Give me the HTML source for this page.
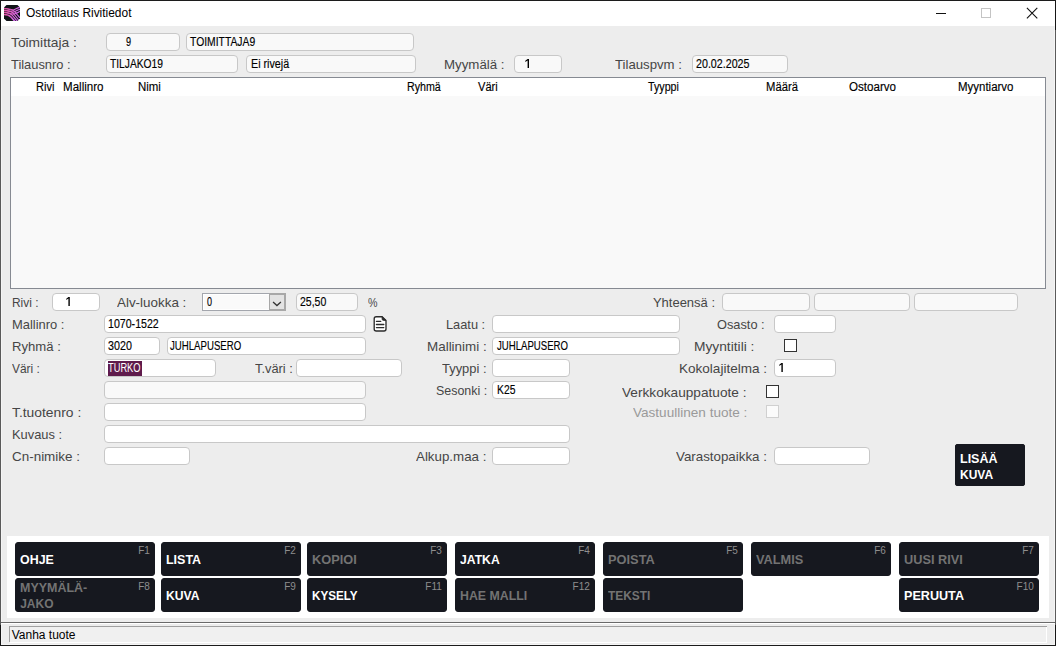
<!DOCTYPE html>
<html><head><meta charset="utf-8"><style>
html,body{margin:0;padding:0;width:1056px;height:646px;overflow:hidden;background:#ededed}
body{position:relative;font-family:"Liberation Sans",sans-serif}
.t{position:absolute;white-space:nowrap;transform-origin:0 0}
.b{position:absolute;box-sizing:content-box}
</style></head><body>
<div class="b" style="left:0px;top:0px;width:1056px;height:646px;background:#5a5a5a;"></div>
<div class="b" style="left:0px;top:0px;width:1px;height:30px;background:#151515;"></div>
<div class="b" style="left:1055px;top:0px;width:1px;height:30px;background:#151515;"></div>
<div class="b" style="left:0px;top:625px;width:1px;height:21px;background:#151515;"></div>
<div class="b" style="left:1055px;top:625px;width:1px;height:21px;background:#151515;"></div>
<div class="b" style="left:1px;top:1px;width:1054px;height:644px;background:#f5f5f5;"></div>
<div class="b" style="left:2px;top:26px;width:1052px;height:618px;background:#ededed;"></div>
<div class="b" style="left:1px;top:1px;width:1054px;height:25px;background:#ffffff;"></div>
<div class="b" style="left:0px;top:0px;width:1056px;height:1px;background:#1c1c1c;"></div>
<div class="b" style="left:0px;top:645px;width:1056px;height:1px;background:#1c1c1c;"></div>
<svg class="b" style="left:4px;top:5px" width="16" height="16" viewBox="0 0 16 16">
<defs><linearGradient id="ig" x1="0" y1="0" x2="1" y2="0"><stop offset="0" stop-color="#e4509e"/><stop offset="1" stop-color="#cf6cf0"/></linearGradient>
<clipPath id="ic"><path d="M2.5 0 H13.5 L16 2.5 V13.5 L13.5 16 H2.5 L0 13.5 V2.5 Z"/></clipPath></defs>
<path d="M2.5 0 H13.5 L16 2.5 V13.5 L13.5 16 H2.5 L0 13.5 V2.5 Z" fill="#121418"/>
<g clip-path="url(#ic)" fill="none" stroke="url(#ig)" stroke-width="1.15">
<path d="M0 3.5 C4 3.5 7 5.5 9 5 C11 4.5 13 2.8 16 2.3"/>
<path d="M0 5.4 C4 5.4 7 7.5 9.5 7 C12 6.5 14 4.5 16 4.3"/>
<path d="M0 7.3 C4 7.3 7 9.5 10 9 C12.5 8.5 14.5 7 16 6.5"/>
<path d="M0 3.5 C5 3.5 8 4 10 6 L16 13"/>
<path d="M0 5.4 C5 5.4 7 6 9 8 L15.5 16"/>
<path d="M0 7.3 C4.5 7.3 6 8 8 10 L13.5 16.5"/>
<path d="M0 9.5 C4 9.5 5 10 7 12 L11 16.5" stroke-width="1.6"/>
</g></svg>
<div class="t" style="left:25.50px;top:7.10px;font-size:12px;line-height:12px;color:#000;transform:scaleX(0.9945);">Ostotilaus Rivitiedot</div>
<div class="b" style="left:936px;top:13px;width:10px;height:1px;background:#111"></div>
<div class="b" style="left:981px;top:8px;width:8px;height:8px;border:1px solid #c4c4c4"></div>
<svg class="b" style="left:1026px;top:7px" width="12" height="12" viewBox="0 0 12 12"><path d="M0.9 0.9 L11.3 11.3 M11.3 0.9 L0.9 11.3" stroke="#111" stroke-width="1.1"/></svg>
<div class="b" style="left:106px;top:33px;width:72px;height:16px;background:#f9f9f9;border:1px solid #c8c8c8;border-radius:4px;"></div>
<div class="b" style="left:186px;top:33px;width:226px;height:16px;background:#f9f9f9;border:1px solid #c8c8c8;border-radius:4px;"></div>
<div class="b" style="left:106px;top:55px;width:130px;height:16px;background:#f9f9f9;border:1px solid #c8c8c8;border-radius:4px;"></div>
<div class="b" style="left:246px;top:55px;width:168px;height:16px;background:#f9f9f9;border:1px solid #c8c8c8;border-radius:4px;"></div>
<div class="b" style="left:514px;top:55px;width:46px;height:16px;background:#f9f9f9;border:1px solid #c8c8c8;border-radius:4px;"></div>
<div class="b" style="left:692px;top:55px;width:94px;height:16px;background:#f9f9f9;border:1px solid #c8c8c8;border-radius:4px;"></div>
<div class="t" style="left:11.40px;top:36.25px;font-size:13px;line-height:13px;color:#464646;transform:scaleX(1.0605);">Toimittaja :</div>
<div class="t" style="left:11.40px;top:58.25px;font-size:13px;line-height:13px;color:#464646;transform:scaleX(0.9902);">Tilausnro :</div>
<div class="t" style="left:444.00px;top:58.25px;font-size:13px;line-height:13px;color:#464646;transform:scaleX(1.0223);">Myymälä :</div>
<div class="t" style="left:615.00px;top:58.25px;font-size:13px;line-height:13px;color:#464646;transform:scaleX(1.0145);">Tilauspvm :</div>
<div class="t" style="left:125.60px;top:35.67px;font-size:12.5px;line-height:12.5px;color:#000000;transform:scaleX(0.7286);-webkit-text-stroke:0.15px #000;">9</div>
<div class="t" style="left:190.20px;top:35.67px;font-size:12.5px;line-height:12.5px;color:#000000;transform:scaleX(0.8279);-webkit-text-stroke:0.15px #000;">TOIMITTAJA9</div>
<div class="t" style="left:110.30px;top:57.67px;font-size:12.5px;line-height:12.5px;color:#000000;transform:scaleX(0.8201);-webkit-text-stroke:0.15px #000;">TILJAKO19</div>
<div class="t" style="left:250.60px;top:57.67px;font-size:12.5px;line-height:12.5px;color:#000000;transform:scaleX(0.8584);-webkit-text-stroke:0.15px #000;">Ei rivejä</div>
<svg class="b" style="left:524px;top:58px" width="6" height="11" viewBox="524 58 6 11"><path d="M527.6 59 H529 V68 H527.6 V60.6 L525.3 61.9 V60.7 Z" fill="#000"/></svg>
<div class="t" style="left:696.00px;top:57.67px;font-size:12.5px;line-height:12.5px;color:#000000;transform:scaleX(0.8544);-webkit-text-stroke:0.15px #000;">20.02.2025</div>
<div class="b" style="left:10px;top:77px;width:1036px;height:212px;background:#868a92;"></div>
<div class="b" style="left:11px;top:78px;width:1034px;height:210px;background:#f9f9f9;"></div>
<div class="b" style="left:11px;top:78px;width:1034px;height:18px;background:#ffffff;"></div>
<div class="t" style="left:36.00px;top:80.84px;font-size:12.3px;line-height:12.3px;color:#000000;transform:scaleX(0.8958);-webkit-text-stroke:0.15px #000;">Rivi</div>
<div class="t" style="left:62.50px;top:80.84px;font-size:12.3px;line-height:12.3px;color:#000000;transform:scaleX(0.9408);-webkit-text-stroke:0.15px #000;">Mallinro</div>
<div class="t" style="left:137.70px;top:80.84px;font-size:12.3px;line-height:12.3px;color:#000000;transform:scaleX(0.9309);-webkit-text-stroke:0.15px #000;">Nimi</div>
<div class="t" style="left:407.40px;top:80.84px;font-size:12.3px;line-height:12.3px;color:#000000;transform:scaleX(0.8669);-webkit-text-stroke:0.15px #000;">Ryhmä</div>
<div class="t" style="left:478.20px;top:80.84px;font-size:12.3px;line-height:12.3px;color:#000000;transform:scaleX(0.9044);-webkit-text-stroke:0.15px #000;">Väri</div>
<div class="t" style="left:647.90px;top:80.84px;font-size:12.3px;line-height:12.3px;color:#000000;transform:scaleX(0.8693);-webkit-text-stroke:0.15px #000;">Tyyppi</div>
<div class="t" style="left:766.30px;top:80.84px;font-size:12.3px;line-height:12.3px;color:#000000;transform:scaleX(0.9161);-webkit-text-stroke:0.15px #000;">Määrä</div>
<div class="t" style="left:849.20px;top:80.84px;font-size:12.3px;line-height:12.3px;color:#000000;transform:scaleX(0.9412);-webkit-text-stroke:0.15px #000;">Ostoarvo</div>
<div class="t" style="left:958.40px;top:80.84px;font-size:12.3px;line-height:12.3px;color:#000000;transform:scaleX(0.9325);-webkit-text-stroke:0.15px #000;">Myyntiarvo</div>
<div class="t" style="left:11.70px;top:296.25px;font-size:13px;line-height:13px;color:#464646;transform:scaleX(0.9182);">Rivi :</div>
<div class="b" style="left:52px;top:293px;width:46px;height:16px;background:#ffffff;border:1px solid #c8c8c8;border-radius:4px;"></div>
<svg class="b" style="left:64.5px;top:296px" width="5.799999999999997" height="11" viewBox="64.5 296 5.799999999999997 11"><path d="M67.89999999999999 297 H69.3 V306 H67.89999999999999 V298.6 L65.8 299.9 V298.7 Z" fill="#000"/></svg>
<div class="t" style="left:117.20px;top:296.25px;font-size:13px;line-height:13px;color:#464646;transform:scaleX(1.0311);">Alv-luokka :</div>
<div class="b" style="left:202px;top:293px;width:84px;height:18px;background:#a3a6ad;"></div>
<div class="b" style="left:203px;top:294px;width:82px;height:16px;background:#ffffff;"></div>
<div class="b" style="left:204px;top:295px;width:65px;height:14px;background:#fafafa;"></div>
<div class="b" style="left:269px;top:293px;width:17px;height:18px;background:#a8a8a8;"></div>
<div class="b" style="left:270px;top:295px;width:14px;height:14px;background:#e3e3e3;"></div>
<svg class="b" style="left:262px;top:288px" width="30" height="28" viewBox="0 0 30 28"><path d="M11.05 14.1 L14.95 17.6 L18.9 14.1" fill="none" stroke="#333" stroke-width="1.3"/></svg>
<div class="t" style="left:207.40px;top:295.68px;font-size:12.5px;line-height:12.5px;color:#000000;transform:scaleX(0.7200);-webkit-text-stroke:0.15px #000;">0</div>
<div class="b" style="left:296px;top:293px;width:60px;height:16px;background:#f9f9f9;border:1px solid #c8c8c8;border-radius:4px;"></div>
<div class="t" style="left:299.50px;top:295.68px;font-size:12.5px;line-height:12.5px;color:#000000;transform:scaleX(0.8384);-webkit-text-stroke:0.15px #000;">25,50</div>
<div class="t" style="left:367.50px;top:296.25px;font-size:13px;line-height:13px;color:#464646;transform:scaleX(0.8211);">%</div>
<div class="t" style="left:652.90px;top:296.25px;font-size:13px;line-height:13px;color:#464646;">Yhteensä :</div>
<div class="b" style="left:722px;top:293px;width:86px;height:16px;background:#f9f9f9;border:1px solid #c8c8c8;border-radius:4px;"></div>
<div class="b" style="left:814px;top:293px;width:94px;height:16px;background:#f9f9f9;border:1px solid #c8c8c8;border-radius:4px;"></div>
<div class="b" style="left:914px;top:293px;width:102px;height:16px;background:#f9f9f9;border:1px solid #c8c8c8;border-radius:4px;"></div>
<div class="t" style="left:11.80px;top:318.25px;font-size:13px;line-height:13px;color:#464646;transform:scaleX(0.9947);">Mallinro :</div>
<div class="b" style="left:104px;top:315px;width:260px;height:16px;background:#ffffff;border:1px solid #c8c8c8;border-radius:4px;"></div>
<div class="t" style="left:108.00px;top:317.68px;font-size:12.5px;line-height:12.5px;color:#000000;transform:scaleX(0.8485);-webkit-text-stroke:0.15px #000;">1070-1522</div>
<svg class="b" style="left:368px;top:312px" width="24" height="24" viewBox="0 0 24 24"><path d="M8.2 4.7 H14.1 L18 8.5 V17 A2 2 0 0 1 16 19 H8.2 A2 2 0 0 1 6.2 17 V6.7 A2 2 0 0 1 8.2 4.7 Z" fill="#fff" stroke="#2b2b2b" stroke-width="1.35" stroke-linejoin="round"/><path d="M14.1 4.7 V7 Q14.1 8.4 15.5 8.4 H18 Z" fill="#2b2b2b" stroke="#2b2b2b" stroke-width="0.8"/><path d="M8.4 9.3 H12.8 M8.4 12.5 H15.8 M8.4 15.6 H15.8" stroke="#2b2b2b" stroke-width="1.3" stroke-linecap="round"/></svg>
<div class="t" style="left:445.50px;top:318.25px;font-size:13px;line-height:13px;color:#464646;transform:scaleX(0.9854);">Laatu :</div>
<div class="b" style="left:492px;top:315px;width:186px;height:16px;background:#ffffff;border:1px solid #c8c8c8;border-radius:4px;"></div>
<div class="t" style="left:716.80px;top:318.25px;font-size:13px;line-height:13px;color:#464646;transform:scaleX(0.9843);">Osasto :</div>
<div class="b" style="left:774px;top:315px;width:60px;height:16px;background:#ffffff;border:1px solid #c8c8c8;border-radius:4px;"></div>
<div class="t" style="left:11.80px;top:340.25px;font-size:13px;line-height:13px;color:#464646;transform:scaleX(1.0091);">Ryhmä :</div>
<div class="b" style="left:104px;top:337px;width:54px;height:16px;background:#ffffff;border:1px solid #c8c8c8;border-radius:4px;"></div>
<div class="b" style="left:167px;top:337px;width:197px;height:16px;background:#ffffff;border:1px solid #c8c8c8;border-radius:4px;"></div>
<div class="t" style="left:108.00px;top:339.68px;font-size:12.5px;line-height:12.5px;color:#000000;transform:scaleX(0.8577);-webkit-text-stroke:0.15px #000;">3020</div>
<div class="t" style="left:170.30px;top:339.68px;font-size:12.5px;line-height:12.5px;color:#000000;transform:scaleX(0.7708);-webkit-text-stroke:0.15px #000;">JUHLAPUSERO</div>
<div class="t" style="left:427.00px;top:340.25px;font-size:13px;line-height:13px;color:#464646;transform:scaleX(1.0326);">Mallinimi :</div>
<div class="b" style="left:492px;top:337px;width:186px;height:16px;background:#ffffff;border:1px solid #c8c8c8;border-radius:4px;"></div>
<div class="t" style="left:496.60px;top:339.68px;font-size:12.5px;line-height:12.5px;color:#000000;transform:scaleX(0.7686);-webkit-text-stroke:0.15px #000;">JUHLAPUSERO</div>
<div class="t" style="left:694.00px;top:340.25px;font-size:13px;line-height:13px;color:#464646;transform:scaleX(1.0583);">Myyntitili :</div>
<div class="b" style="left:784px;top:339px;width:11px;height:11px;background:#fff;border:1px solid #333;border-radius:0px;"></div>
<div class="t" style="left:11.50px;top:362.25px;font-size:13px;line-height:13px;color:#464646;transform:scaleX(0.9178);">Väri :</div>
<div class="b" style="left:104px;top:359px;width:110px;height:16px;background:#ffffff;border:1px solid #c8c8c8;border-radius:4px;"></div>
<div class="b" style="left:108px;top:361px;width:34px;height:15px;background:#5f1b4c;"></div>
<div class="t" style="left:108.00px;top:361.68px;font-size:12.5px;line-height:12.5px;color:#fff;transform:scaleX(0.7429);">TURKO</div>
<div class="t" style="left:254.60px;top:362.25px;font-size:13px;line-height:13px;color:#464646;transform:scaleX(0.9890);">T.väri :</div>
<div class="b" style="left:296px;top:359px;width:104px;height:16px;background:#ffffff;border:1px solid #c8c8c8;border-radius:4px;"></div>
<div class="t" style="left:442.00px;top:362.25px;font-size:13px;line-height:13px;color:#464646;transform:scaleX(0.9944);">Tyyppi :</div>
<div class="b" style="left:492px;top:359px;width:76px;height:16px;background:#ffffff;border:1px solid #c8c8c8;border-radius:4px;"></div>
<div class="t" style="left:678.70px;top:362.25px;font-size:13px;line-height:13px;color:#464646;transform:scaleX(1.0414);">Kokolajitelma :</div>
<div class="b" style="left:774px;top:359px;width:60px;height:16px;background:#ffffff;border:1px solid #c8c8c8;border-radius:4px;"></div>
<svg class="b" style="left:777.5px;top:362px" width="5.7999999999999545" height="11" viewBox="777.5 362 5.7999999999999545 11"><path d="M780.9 363 H782.3 V372 H780.9 V364.6 L778.8 365.9 V364.7 Z" fill="#000"/></svg>
<div class="b" style="left:104px;top:381px;width:260px;height:16px;background:#f9f9f9;border:1px solid #c8c8c8;border-radius:4px;"></div>
<div class="t" style="left:435.50px;top:384.25px;font-size:13px;line-height:13px;color:#464646;transform:scaleX(0.9564);">Sesonki :</div>
<div class="b" style="left:492px;top:381px;width:76px;height:16px;background:#ffffff;border:1px solid #c8c8c8;border-radius:4px;"></div>
<div class="t" style="left:496.60px;top:383.68px;font-size:12.5px;line-height:12.5px;color:#000000;transform:scaleX(0.8270);-webkit-text-stroke:0.15px #000;">K25</div>
<div class="t" style="left:622.30px;top:386.25px;font-size:13px;line-height:13px;color:#464646;transform:scaleX(1.0501);">Verkkokauppatuote :</div>
<div class="b" style="left:766px;top:385px;width:11px;height:11px;background:#fff;border:1px solid #333;border-radius:0px;"></div>
<div class="t" style="left:11.50px;top:406.25px;font-size:13px;line-height:13px;color:#464646;transform:scaleX(1.0646);">T.tuotenro :</div>
<div class="b" style="left:104px;top:403px;width:260px;height:16px;background:#ffffff;border:1px solid #c8c8c8;border-radius:4px;"></div>
<div class="t" style="left:632.50px;top:406.25px;font-size:13px;line-height:13px;color:#9a9a9a;transform:scaleX(1.0430);">Vastuullinen tuote :</div>
<div class="b" style="left:766px;top:405px;width:11px;height:11px;background:#fbfbfb;border:1px solid #d0d0d0;border-radius:0px;"></div>
<div class="t" style="left:11.50px;top:428.25px;font-size:13px;line-height:13px;color:#464646;transform:scaleX(0.9907);">Kuvaus :</div>
<div class="b" style="left:104px;top:425px;width:464px;height:16px;background:#ffffff;border:1px solid #c8c8c8;border-radius:4px;"></div>
<div class="t" style="left:11.50px;top:450.25px;font-size:13px;line-height:13px;color:#464646;transform:scaleX(1.0337);">Cn-nimike :</div>
<div class="b" style="left:104px;top:447px;width:84px;height:16px;background:#ffffff;border:1px solid #c8c8c8;border-radius:4px;"></div>
<div class="t" style="left:416.20px;top:450.25px;font-size:13px;line-height:13px;color:#464646;transform:scaleX(1.0256);">Alkup.maa :</div>
<div class="b" style="left:492px;top:447px;width:76px;height:16px;background:#ffffff;border:1px solid #c8c8c8;border-radius:4px;"></div>
<div class="t" style="left:676.00px;top:450.25px;font-size:13px;line-height:13px;color:#464646;transform:scaleX(1.0253);">Varastopaikka :</div>
<div class="b" style="left:774px;top:447px;width:94px;height:16px;background:#ffffff;border:1px solid #c8c8c8;border-radius:4px;"></div>
<div class="b" style="left:955px;top:444px;width:68px;height:40px;background:#16181f;border:1px solid #16181f;border-radius:2px;"></div>
<div class="t" style="left:960.00px;top:453.10px;font-size:12px;line-height:12px;color:#fff;font-weight:bold;transform:scaleX(1.0417);">LISÄÄ</div>
<div class="t" style="left:960.00px;top:469.10px;font-size:12px;line-height:12px;color:#fff;font-weight:bold;">KUVA</div>
<div class="b" style="left:7px;top:536px;width:1042px;height:82px;background:#ffffff;"></div>
<div class="b" style="left:15px;top:542px;width:138px;height:32px;background:#16181f;border:1px solid #16181f;border-radius:3px;"></div>
<div class="t" style="left:20.20px;top:554.10px;font-size:12px;line-height:12px;color:#ffffff;font-weight:bold;transform:scaleX(1.0355);">OHJE</div>
<div class="t" style="left:138.13px;top:545.80px;font-size:10px;line-height:10px;color:#8e8e8e;">F1</div>
<div class="b" style="left:161px;top:542px;width:138px;height:32px;background:#16181f;border:1px solid #16181f;border-radius:3px;"></div>
<div class="t" style="left:166.20px;top:554.10px;font-size:12px;line-height:12px;color:#ffffff;font-weight:bold;transform:scaleX(1.0380);">LISTA</div>
<div class="t" style="left:284.13px;top:545.80px;font-size:10px;line-height:10px;color:#8e8e8e;">F2</div>
<div class="b" style="left:307px;top:542px;width:138px;height:32px;background:#16181f;border:1px solid #16181f;border-radius:3px;"></div>
<div class="t" style="left:312.20px;top:554.10px;font-size:12px;line-height:12px;color:#737373;font-weight:bold;transform:scaleX(1.0643);">KOPIOI</div>
<div class="t" style="left:430.13px;top:545.80px;font-size:10px;line-height:10px;color:#8e8e8e;">F3</div>
<div class="b" style="left:455px;top:542px;width:138px;height:32px;background:#16181f;border:1px solid #16181f;border-radius:3px;"></div>
<div class="t" style="left:460.20px;top:554.10px;font-size:12px;line-height:12px;color:#ffffff;font-weight:bold;transform:scaleX(1.0148);">JATKA</div>
<div class="t" style="left:578.13px;top:545.80px;font-size:10px;line-height:10px;color:#8e8e8e;">F4</div>
<div class="b" style="left:603px;top:542px;width:138px;height:32px;background:#16181f;border:1px solid #16181f;border-radius:3px;"></div>
<div class="t" style="left:608.20px;top:554.10px;font-size:12px;line-height:12px;color:#737373;font-weight:bold;transform:scaleX(1.0685);">POISTA</div>
<div class="t" style="left:726.13px;top:545.80px;font-size:10px;line-height:10px;color:#8e8e8e;">F5</div>
<div class="b" style="left:751px;top:542px;width:138px;height:32px;background:#16181f;border:1px solid #16181f;border-radius:3px;"></div>
<div class="t" style="left:756.20px;top:554.10px;font-size:12px;line-height:12px;color:#737373;font-weight:bold;transform:scaleX(1.0631);">VALMIS</div>
<div class="t" style="left:874.13px;top:545.80px;font-size:10px;line-height:10px;color:#8e8e8e;">F6</div>
<div class="b" style="left:899px;top:542px;width:138px;height:32px;background:#16181f;border:1px solid #16181f;border-radius:3px;"></div>
<div class="t" style="left:904.20px;top:554.10px;font-size:12px;line-height:12px;color:#737373;font-weight:bold;transform:scaleX(1.0611);">UUSI RIVI</div>
<div class="t" style="left:1022.13px;top:545.80px;font-size:10px;line-height:10px;color:#8e8e8e;">F7</div>
<div class="b" style="left:15px;top:578px;width:138px;height:32px;background:#16181f;border:1px solid #16181f;border-radius:3px;"></div>
<div class="t" style="left:20.20px;top:582.10px;font-size:12px;line-height:12px;color:#737373;font-weight:bold;transform:scaleX(1.0390);">MYYMÄLÄ-</div>
<div class="t" style="left:20.20px;top:598.10px;font-size:12px;line-height:12px;color:#737373;font-weight:bold;">JAKO</div>
<div class="t" style="left:138.13px;top:581.80px;font-size:10px;line-height:10px;color:#8e8e8e;">F8</div>
<div class="b" style="left:161px;top:578px;width:138px;height:32px;background:#16181f;border:1px solid #16181f;border-radius:3px;"></div>
<div class="t" style="left:166.20px;top:590.10px;font-size:12px;line-height:12px;color:#ffffff;font-weight:bold;transform:scaleX(1.0115);">KUVA</div>
<div class="t" style="left:284.13px;top:581.80px;font-size:10px;line-height:10px;color:#8e8e8e;">F9</div>
<div class="b" style="left:307px;top:578px;width:138px;height:32px;background:#16181f;border:1px solid #16181f;border-radius:3px;"></div>
<div class="t" style="left:312.20px;top:590.10px;font-size:12px;line-height:12px;color:#ffffff;font-weight:bold;transform:scaleX(0.9719);">KYSELY</div>
<div class="t" style="left:425.31px;top:581.80px;font-size:10px;line-height:10px;color:#8e8e8e;">F11</div>
<div class="b" style="left:455px;top:578px;width:138px;height:32px;background:#16181f;border:1px solid #16181f;border-radius:3px;"></div>
<div class="t" style="left:460.20px;top:590.10px;font-size:12px;line-height:12px;color:#737373;font-weight:bold;transform:scaleX(1.0294);">HAE MALLI</div>
<div class="t" style="left:572.57px;top:581.80px;font-size:10px;line-height:10px;color:#8e8e8e;">F12</div>
<div class="b" style="left:603px;top:578px;width:138px;height:32px;background:#16181f;border:1px solid #16181f;border-radius:3px;"></div>
<div class="t" style="left:608.20px;top:590.10px;font-size:12px;line-height:12px;color:#737373;font-weight:bold;transform:scaleX(0.9925);">TEKSTI</div>
<div class="b" style="left:899px;top:578px;width:138px;height:32px;background:#16181f;border:1px solid #16181f;border-radius:3px;"></div>
<div class="t" style="left:904.20px;top:590.10px;font-size:12px;line-height:12px;color:#ffffff;font-weight:bold;transform:scaleX(1.0504);">PERUUTA</div>
<div class="t" style="left:1016.57px;top:581.80px;font-size:10px;line-height:10px;color:#8e8e8e;">F10</div>
<div class="b" style="left:1px;top:622px;width:1054px;height:1px;background:#6a6a6a;"></div>
<div class="b" style="left:1px;top:623px;width:1054px;height:1px;background:#ffffff;"></div>
<div class="b" style="left:9px;top:626px;width:1038px;height:16px;background:#a0a0a0;"></div>
<div class="b" style="left:10px;top:627px;width:1037px;height:16px;background:#ffffff;"></div>
<div class="b" style="left:10px;top:627px;width:1036px;height:15px;background:#f0f0f0;"></div>
<div class="t" style="left:11.70px;top:629.10px;font-size:12px;line-height:12px;color:#000;">Vanha tuote</div>
</body></html>
